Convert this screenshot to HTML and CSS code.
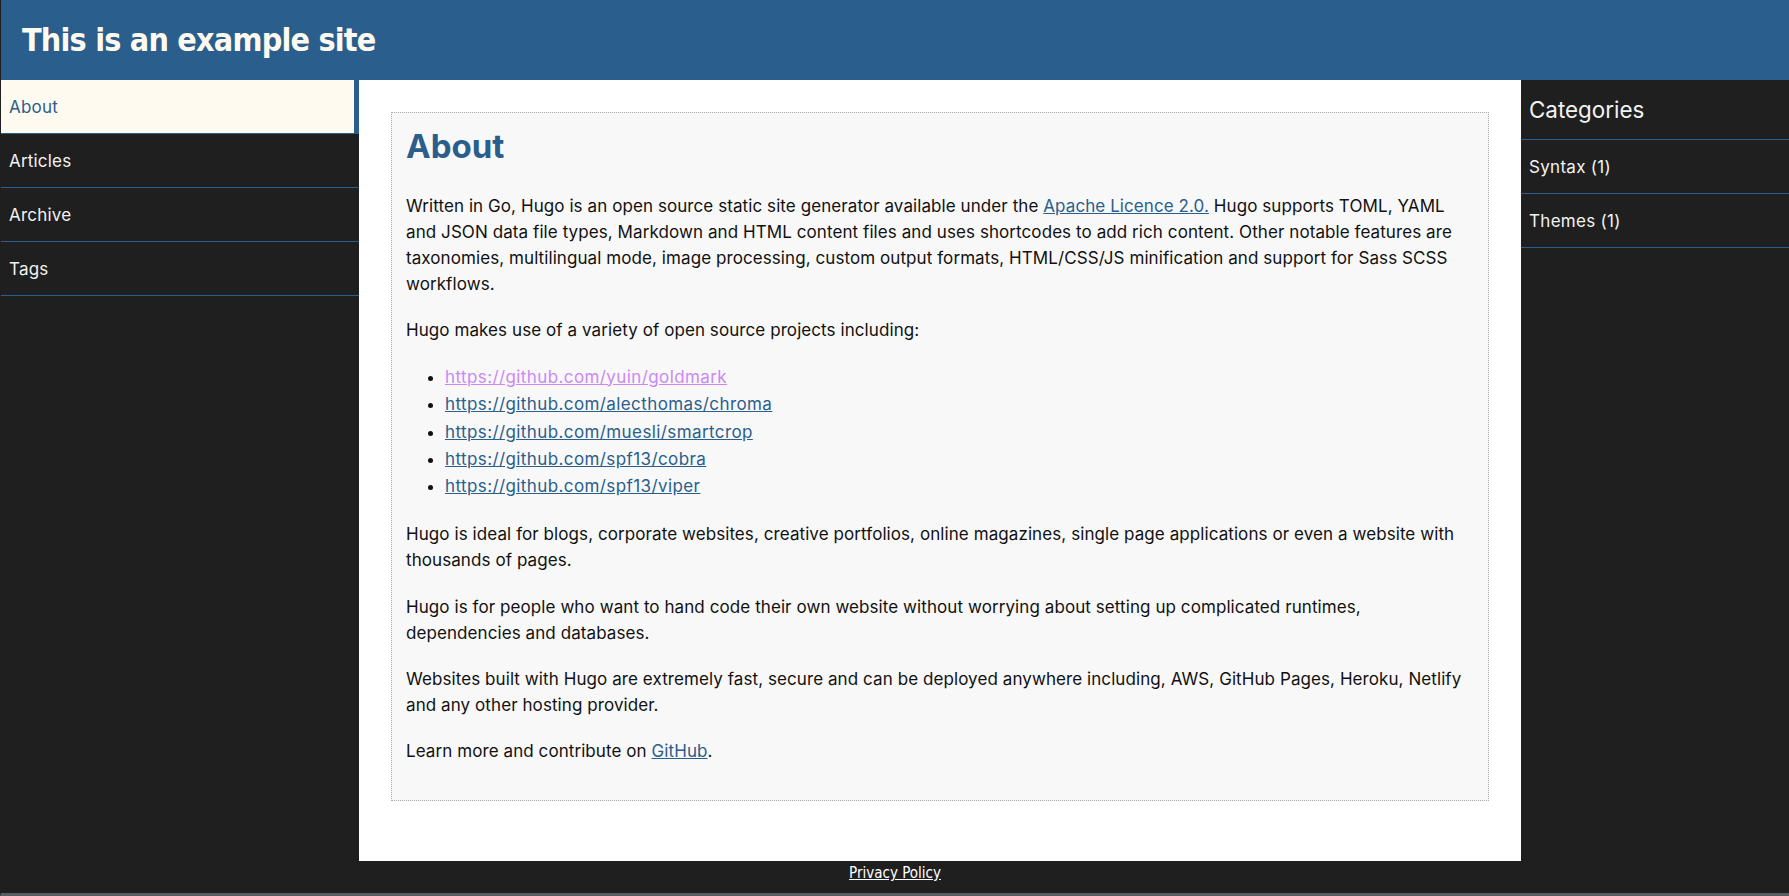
FILE: index.html
```html
<!DOCTYPE html>
<html lang="en">
<head>
<meta charset="utf-8">
<title>About | This is an example site</title>
<link rel="stylesheet" href="styles.css">
</head>
<body>
<header class="site-header">
  <h1 class="site-title">This is an example site</h1>
</header>
<nav class="site-nav">
  <a class="nav-item active" href="#">About</a>
  <a class="nav-item" href="#">Articles</a>
  <a class="nav-item" href="#">Archive</a>
  <a class="nav-item" href="#">Tags</a>
</nav>
<main class="content">
  <article class="post">
    <h2 class="post-title">About</h2>
    <p>Written in Go, Hugo is an open source static site generator available under the <a href="#">Apache Licence 2.0.</a> Hugo supports TOML, YAML<br>and JSON data file types, Markdown and HTML content files and uses shortcodes to add rich content. Other notable features are<br>taxonomies, multilingual mode, image processing, custom output formats, HTML/CSS/JS minification and support for Sass SCSS<br>workflows.</p>
    <p>Hugo makes use of a variety of open source projects including:</p>
    <ul class="links">
      <li><a class="visited" href="#">https://github.com/yuin/goldmark</a></li>
      <li><a href="#">https://github.com/alecthomas/chroma</a></li>
      <li><a href="#">https://github.com/muesli/smartcrop</a></li>
      <li><a href="#">https://github.com/spf13/cobra</a></li>
      <li><a href="#">https://github.com/spf13/viper</a></li>
    </ul>
    <p>Hugo is ideal for blogs, corporate websites, creative portfolios, online magazines, single page applications or even a website with<br>thousands of pages.</p>
    <p>Hugo is for people who want to hand code their own website without worrying about setting up complicated runtimes,<br>dependencies and databases.</p>
    <p>Websites built with Hugo are extremely fast, secure and can be deployed anywhere including, AWS, GitHub Pages, Heroku, Netlify<br>and any other hosting provider.</p>
    <p>Learn more and contribute on <a href="#">GitHub</a>.</p>
  </article>
</main>
<aside class="sidebar">
  <h3 class="sidebar-title">Categories</h3>
  <a class="cat-item" href="#">Syntax (1)</a>
  <a class="cat-item" href="#">Themes (1)</a>
</aside>
<footer class="site-footer">
  <a href="#">Privacy Policy</a>
</footer>
</body>
</html>
```
FILE: styles.css
```css
html, body {
  margin: 0;
  padding: 0;
}
body {
  box-sizing: border-box;
  height: 896px;
  background: #1f1f1f;
  border-left: 1px solid #1f1f1f;
  border-bottom: 3px solid #585d63;
  display: grid;
  grid-template-columns: 358px 1fr 268px;
  grid-template-rows: 80px 1fr 32px;
  font-family: "Inter", "Open Sans", sans-serif;
  overflow: hidden;
}
.site-header {
  grid-column: 1 / -1;
  background: #2a5e8c;
  display: flex;
  align-items: center;
  padding-left: 21px;
}
.site-title {
  margin: 0;
  color: #fffaf0;
  font-family: "DejaVu Sans Condensed", "DejaVu Sans", sans-serif;
  font-stretch: condensed;
  font-weight: bold;
  font-size: 32px;
  letter-spacing: -0.8px;
  line-height: 1;
}
.site-nav {
  display: flex;
  flex-direction: column;
  background: #1f1f1f;
}
.nav-item {
  display: block;
  height: 53px;
  line-height: 55px;
  padding-left: 8px;
  border-bottom: 1px solid #2a5e8c;
  color: #f2f2f2;
  text-decoration: none;
  font-size: 17px;
  letter-spacing: 0.2px;
}
.nav-item.active {
  background: #fffaf0;
  color: #2a5e8c;
  border-right: 5px solid #2a5e8c;
}
.content {
  background: #ffffff;
  padding: 32px 32px 60px 32px;
}
.post {
  background: #f8f8f8;
  border: 1px dotted #aaaaaa;
  padding: 14px 14px 15px 14px;
  color: #111111;
  font-size: 17px;
  letter-spacing: 0.08px;
  line-height: 26px;
}
.post-title {
  margin: 0 0 28px 0;
  color: #2a5e8c;
  font-size: 33px;
  line-height: 38px;
  font-weight: 700;
  letter-spacing: 0;
}
.post p {
  margin: 0 0 20.4px 0;
  white-space: nowrap;
}
.post a {
  color: #2a5e8c;
}
.post a.visited {
  color: #cc88f5;
}
.links {
  margin: 0 0 20.4px 0;
  padding-left: 39px;
  line-height: 27.4px;
  letter-spacing: 0.4px;
}
.sidebar {
  background: #1f1f1f;
  display: flex;
  flex-direction: column;
}
.sidebar-title {
  margin: 0;
  height: 59px;
  line-height: 59px;
  padding-left: 8px;
  border-bottom: 1px solid #2a5e8c;
  color: #f2f2f2;
  font-weight: 400;
  font-size: 22.4px;
}
.cat-item {
  display: block;
  height: 53px;
  line-height: 55px;
  padding-left: 8px;
  border-bottom: 1px solid #2a5e8c;
  color: #f2f2f2;
  text-decoration: none;
  font-size: 17px;
  letter-spacing: 0.3px;
}
.site-footer {
  grid-column: 1 / -1;
  display: flex;
  justify-content: center;
  align-items: flex-start;
  padding-top: 3px;
  background: #1f1f1f;
}
.site-footer a {
  color: #ffffff;
  font-family: "DejaVu Sans Condensed", "DejaVu Sans", sans-serif;
  font-stretch: condensed;
  font-size: 15px;
  line-height: 18px;
}
```
